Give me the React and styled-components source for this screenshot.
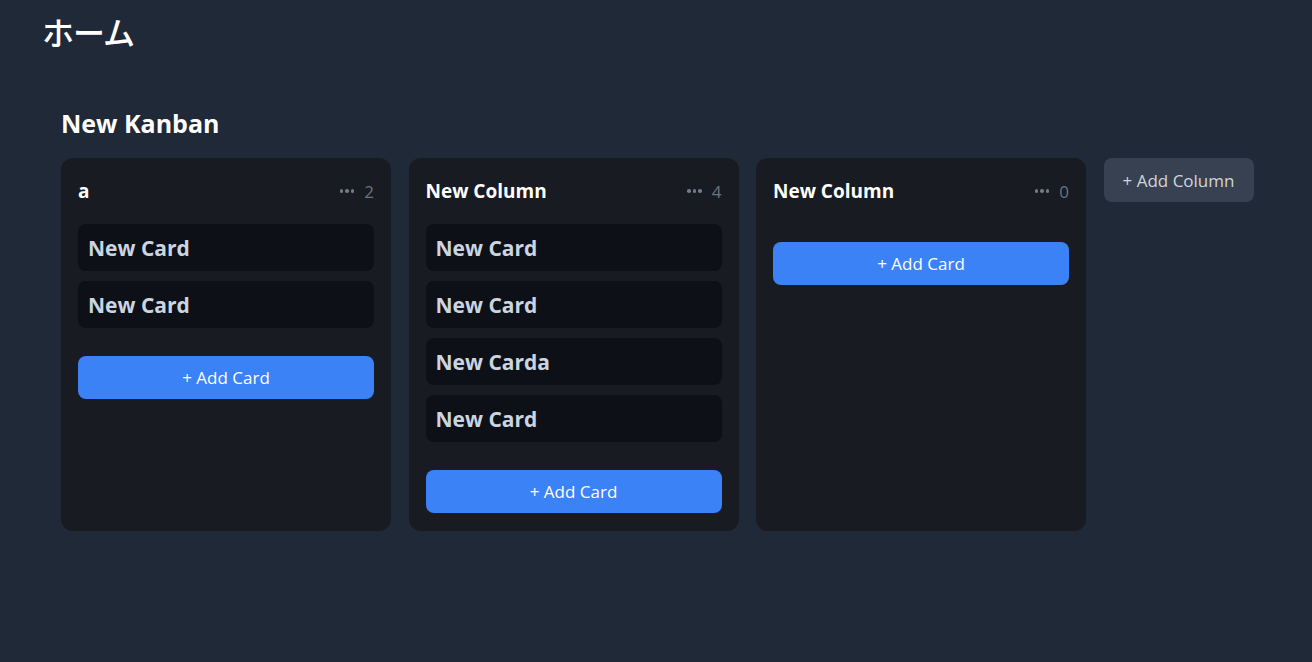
import React from 'react'
import styled, { createGlobalStyle } from 'styled-components'

const GlobalStyle = createGlobalStyle`
   html, body {
      margin: 0;
      padding: 0;
      background-color: #1f2937;
   }
   body {
      font-family: 'Open Sans', 'Noto Sans', 'Noto Sans CJK JP', sans-serif;
      color: #ffffff;
   }
`

const columns = [
   { title: 'a', cards: ['New Card', 'New Card'] },
   { title: 'New Column', cards: ['New Card', 'New Card', 'New Carda', 'New Card'] },
   { title: 'New Column', cards: [] }
]

const App = () => (
   <React.Fragment>
      <GlobalStyle />
      <Page>
         <PageTitle>ホーム</PageTitle>
         <Board>
            <BoardTitle>New Kanban</BoardTitle>
            <Columns>
               {columns.map((column, i) => (
                  <Column key={i}>
                     <ColumnHeader>
                        <ColumnTitle>{column.title}</ColumnTitle>
                        <ColumnMeta>
                           <Dots>
                              <span />
                              <span />
                              <span />
                           </Dots>
                           <Count>{column.cards.length}</Count>
                        </ColumnMeta>
                     </ColumnHeader>
                     <CardList>
                        {column.cards.map((card, cardIndex) => (
                           <Card key={cardIndex}>{card}</Card>
                        ))}
                     </CardList>
                     <AddCardButton>+ Add Card</AddCardButton>
                  </Column>
               ))}
               <AddColumnButton>+ Add Column</AddColumnButton>
            </Columns>
         </Board>
      </Page>
   </React.Fragment>
)

export default App

const Page = styled.div`
   min-height: 662px;
   padding: 6px 0 0 42px;
   box-sizing: border-box;
`

const PageTitle = styled.h1`
   margin: 0;
   font-family: 'Noto Sans CJK JP', sans-serif;
   font-size: 32px;
   font-weight: 500;
   line-height: 50px;
   letter-spacing: -1px;
`

const Board = styled.div`
   padding: 52px 0 0 19px;
`

const BoardTitle = styled.h2`
   margin: 0 0 20px;
   font-size: 25px;
   font-weight: 700;
   line-height: 30px;
`

const Columns = styled.div`
   display: flex;
   align-items: flex-start;
   gap: 17.5px;
`

const Column = styled.div`
   width: 330px;
   height: 373px;
   box-sizing: border-box;
   padding: 17px 17px 18px;
   background-color: #181b22;
   border-radius: 12px;
   display: flex;
   flex-direction: column;
`

const ColumnHeader = styled.div`
   display: flex;
   align-items: center;
   justify-content: space-between;
   height: 32px;
   margin-bottom: 17px;
`

const ColumnTitle = styled.h3`
   margin: 0;
   font-size: 19px;
   font-weight: 700;
   color: #ffffff;
`

const ColumnMeta = styled.div`
   display: flex;
   align-items: center;
   gap: 10px;
   color: #6b7280;
`

const Dots = styled.div`
   display: flex;
   gap: 2px;
   span {
      width: 3.5px;
      height: 3.5px;
      border-radius: 50%;
      background-color: #737b88;
   }
`

const Count = styled.span`
   font-size: 17px;
   font-weight: 400;
   color: #6b7280;
`

const CardList = styled.div`
   display: flex;
   flex-direction: column;
   margin-bottom: 17.5px;
`

const Card = styled.div`
   height: 47px;
   margin-bottom: 10px;
   display: flex;
   align-items: center;
   padding: 0 10px;
   background-color: #0d1017;
   border-radius: 8px;
   font-size: 21px;
   font-weight: 700;
   color: #cbd5e1;
`

const AddCardButton = styled.button`
   height: 43px;
   border: none;
   border-radius: 8px;
   background-color: #3b82f6;
   color: #ffffff;
   font-family: inherit;
   font-size: 17px;
   cursor: pointer;
`

const AddColumnButton = styled.button`
   width: 150px;
   height: 44px;
   border: none;
   border-radius: 8px;
   background-color: #374151;
   color: #d1d5db;
   font-family: inherit;
   font-size: 17px;
   cursor: pointer;
`
